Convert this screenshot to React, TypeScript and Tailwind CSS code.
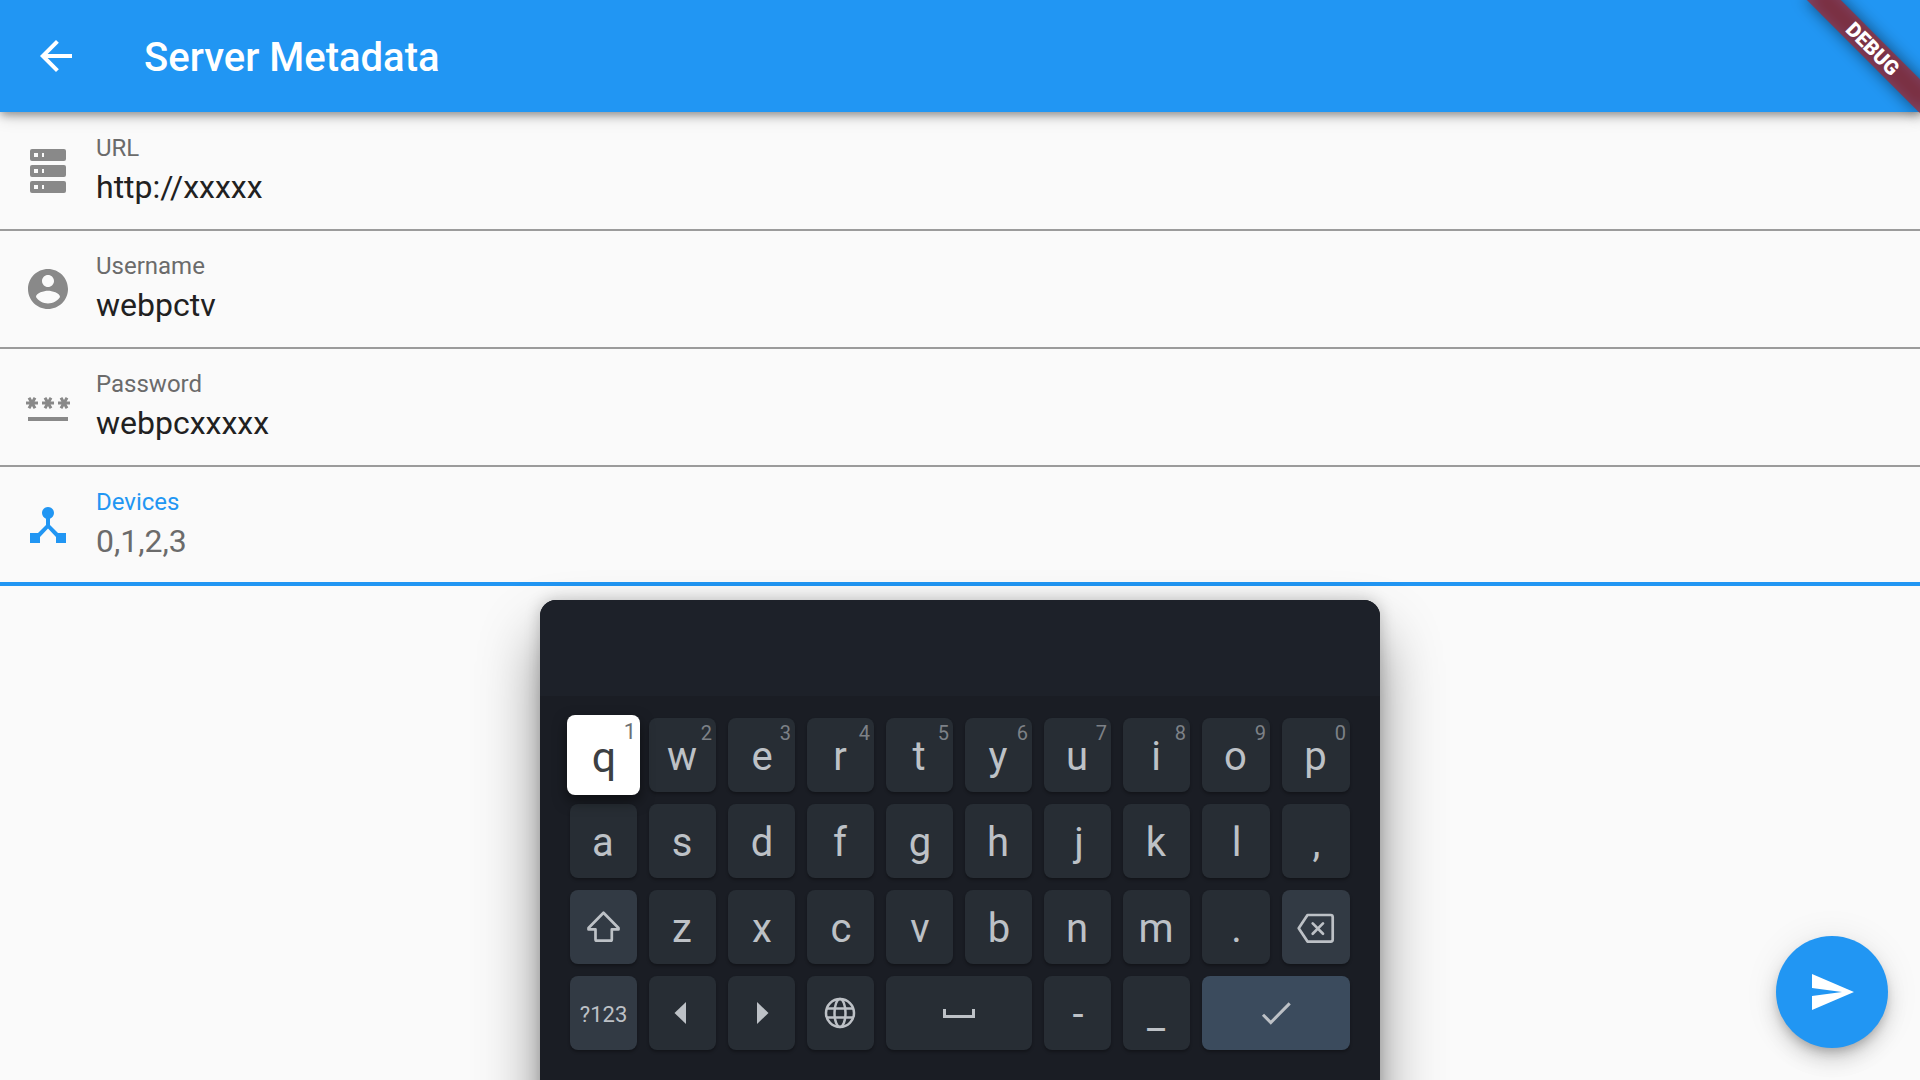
import type { ReactNode } from 'react';

const ICONS = {
  back: 'M20 11H7.83l5.59-5.59L12 4l-8 8 8 8 1.41-1.41L7.83 13H20v-2z',
  server:
    'M4,1H20A1,1 0 0,1 21,2V6A1,1 0 0,1 20,7H4A1,1 0 0,1 3,6V2A1,1 0 0,1 4,1M4,9H20A1,1 0 0,1 21,10V14A1,1 0 0,1 20,15H4A1,1 0 0,1 3,14V10A1,1 0 0,1 4,9M4,17H20A1,1 0 0,1 21,18V22A1,1 0 0,1 20,23H4A1,1 0 0,1 3,22V18A1,1 0 0,1 4,17M9,5H10V3H9V5M9,13H10V11H9V13M9,21H10V19H9V21M5,3V5H7V3H5M5,11V13H7V11H5M5,19V21H7V19H5Z',
  account:
    'M12 2C6.48 2 2 6.48 2 12s4.48 10 10 10 10-4.48 10-10S17.52 2 12 2zm0 3c1.66 0 3 1.34 3 3s-1.34 3-3 3-3-1.34-3-3 1.34-3 3-3zm0 14.2c-2.5 0-4.71-1.28-6-3.22.03-1.99 4-3.08 6-3.08 1.99 0 5.97 1.09 6 3.08-1.29 1.94-3.5 3.22-6 3.22z',
  password:
    'M2 17h20v2H2v-2zm1.15-4.05L4 11.47l.85 1.48 1.3-.75-.85-1.48H7v-1.5H5.3l.85-1.47L4.85 7 4 8.47 3.15 7l-1.3.75.85 1.47H1v1.5h1.7l-.85 1.48 1.3.75zm6.7-.75l1.3.75.85-1.48.85 1.48 1.3-.75-.85-1.48H15v-1.5h-1.7l.85-1.47-1.3-.75L12 8.47 11.15 7l-1.3.75.85 1.47H9v1.5h1.7l-.85 1.48zM23 9.22h-1.7l.85-1.47-1.3-.75L20 8.47 19.15 7l-1.3.75.85 1.47H17v1.5h1.7l-.85 1.48 1.3.75.85-1.48.85 1.48 1.3-.75-.85-1.48H23v-1.5z',
  hub: 'M17 16l-4-4V8.82C14.16 8.4 15 7.3 15 6c0-1.66-1.34-3-3-3S9 4.34 9 6c0 1.3.84 2.4 2 2.82V12l-4 4H3v5h5v-3.05l4-4.2 4 4.2V21h5v-5h-4z',
  send: 'M2.01 21L23 12 2.01 3 2 10l15 2-15 2z',
};

function Icon({ d }: { d: string }) {
  return (
    <svg viewBox="0 0 24 24" className="size-12 shrink-0" fill="currentColor" fillRule="evenodd">
      <path d={d} />
    </svg>
  );
}

function Field({ icon, label, value, focused = false, first = false }: {
  icon: string;
  label: string;
  value: string;
  focused?: boolean;
  first?: boolean;
}) {
  return (
    <div
      className={`flex box-border px-6 ${first ? 'h-[119px] pt-[35px]' : focused ? 'h-[119px] pt-[34px]' : 'h-[118px] pt-[34px]'} ${
        focused ? 'border-b-4 border-[#2196f3]' : 'border-b-2 border-[#9b9b9b]'
      }`}
    >
      <div className={focused ? 'text-[#2196f3]' : 'text-[#898989]'}>
        <Icon d={icon} />
      </div>
      <div className="ml-6 -mt-[13px] flex flex-col">
        <span className={`text-2xl leading-7 ${focused ? 'text-[#2196f3]' : 'text-[#6b6b6b]'}`}>{label}</span>
        <span className={`mt-[6px] text-[32px] leading-[38px] ${focused ? 'text-[#6b6b6b]' : 'text-[#212121]'}`}>
          {value}
        </span>
      </div>
    </div>
  );
}

function Key({ children, hint, tone = 'letter' }: {
  children: ReactNode;
  hint?: string;
  tone?: 'letter' | 'special' | 'enter' | 'active';
}) {
  const tones = {
    letter: 'bg-[#272d34] text-[#bdc1c6]',
    special: 'bg-[#323a44] text-[#bdc1c6]',
    enter: 'col-span-2 bg-[#3b4b5d] text-[#bdc1c6]',
    active: 'z-10 -mx-[3px] -my-[3px] bg-white text-[#3c4043] shadow-[0_6px_14px_rgba(0,0,0,0.5)]',
  };
  return (
    <div
      className={`relative flex items-center justify-center rounded-lg text-[40px] leading-none shadow-[0_2px_3px_rgba(0,0,0,0.3)] ${tones[tone]}`}
    >
      {children}
      {hint && (
        <span
          className={
            tone === 'active'
              ? 'absolute right-1 top-[6px] text-[22px] leading-[22px] text-[#6b6f74]'
              : 'absolute right-1 top-[5px] text-[20px] leading-[20px] text-[#7d8187]'
          }
        >
          {hint}
        </span>
      )}
    </div>
  );
}

function Letter({ c }: { c: string }) {
  const nudge = c === 'j' ? 'pl-[3px]' : 'edgxcvbl.,-'.includes(c) ? 'pl-px' : 'pr-px';
  return <span className={`pt-1 ${nudge}`}>{c}</span>;
}

function Stroke({ children }: { children: ReactNode }) {
  return (
    <svg viewBox="0 0 40 40" className="size-10" fill="none" stroke="currentColor" strokeWidth="2.7" strokeLinejoin="round" strokeLinecap="round">
      {children}
    </svg>
  );
}

function Keyboard() {
  return (
    <div className="absolute left-[540px] top-[600px] flex h-[520px] w-[840px] flex-col overflow-visible rounded-t-2xl bg-[#1a1d24] shadow-[0_0_16px_rgba(0,0,0,0.22),0_36px_60px_rgba(0,0,0,0.42)]">
      <div className="h-24 rounded-t-2xl bg-[#1d2129]" />
      <div className="grid grid-cols-[repeat(8,67px)_repeat(2,68px)] auto-rows-[74px] gap-3 px-[30px] pt-[22px]">
        <Key tone="active" hint="1">
          <span className="pt-[5px] pl-px text-[43px]">q</span>
        </Key>
        {['w', 'e', 'r', 't', 'y', 'u', 'i', 'o', 'p'].map((c, i) => (
          <Key key={c} hint={String((i + 2) % 10)}>
            <Letter c={c} />
          </Key>
        ))}
        {['a', 's', 'd', 'f', 'g', 'h', 'j', 'k', 'l', ','].map((c) => (
          <Key key={c}>
            <Letter c={c} />
          </Key>
        ))}
        <Key tone="special">
          <Stroke>
            <path d="M19.500 5.700 34.500 21V22.400H27.800V32.500Q27.800 33.700 26.600 33.700H12.700Q11.500 33.700 11.500 32.500V22.400H4.500V21Z" />
          </Stroke>
        </Key>
        {['z', 'x', 'c', 'v', 'b', 'n', 'm', '.'].map((c) => (
          <Key key={c}>
            <Letter c={c} />
          </Key>
        ))}
        <Key tone="special">
          <Stroke>
            <path d="M11.500 8H34.700Q36.700 8 36.700 10V32.600Q36.700 34.600 34.700 34.600H11.500L2.700 21.300Z M16.700 16.400 27 26.700M27 16.400 16.700 26.700" />
          </Stroke>
        </Key>
        <Key tone="special">
          <span className="pt-1 text-[22px]">?123</span>
        </Key>
        <Key>
          <svg viewBox="0 0 12 22" className="mr-[5px] h-[22px] w-3" fill="currentColor">
            <path d="M12 0V22L0.500 11Z" />
          </svg>
        </Key>
        <Key>
          <svg viewBox="0 0 12 22" className="ml-[3px] h-[22px] w-3" fill="currentColor">
            <path d="M0 0V22L11.500 11Z" />
          </svg>
        </Key>
        <Key>
          <svg viewBox="0 0 32 32" className="mr-px size-8" fill="none" stroke="currentColor" strokeWidth="2.5">
            <circle cx="16" cy="16" r="14" />
            <ellipse cx="16" cy="16" rx="5.500" ry="14" />
            <path d="M3 11.500H29M3 20.500H29" />
          </svg>
        </Key>
        <div className="col-span-2 grid">
          <Key>
            <svg viewBox="0 0 32 10" className="mt-[2px] h-[10px] w-8" fill="none" stroke="currentColor" strokeWidth="3">
              <path d="M1.500 0V7.500H30.500V0" />
            </svg>
          </Key>
        </div>
        <Key>
          <Letter c="-" />
        </Key>
        <Key>
          <Letter c="_" />
        </Key>
        <Key tone="enter">
          <svg viewBox="0 0 30 24" className="h-6 w-[30px]" fill="none" stroke="currentColor" strokeWidth="3">
            <path d="M2 13.700 9.800 21.500 28.700 2.400" />
          </svg>
        </Key>
      </div>
    </div>
  );
}

function DebugBanner() {
  return (
    <div className="pointer-events-none absolute right-0 top-0 size-[160px] overflow-hidden">
      <div className="absolute left-[80px] top-0 h-[80px] w-[160px] origin-top rotate-45">
        <div className="absolute left-0 top-[56px] h-6 w-[160px] bg-black/50 blur-[8px]" />
        <div className="absolute left-0 top-[56px] h-6 w-[160px] bg-[#b71c1c]/63 pl-[2px] text-center text-[20.400px] font-black leading-6 text-white">
          DEBUG
        </div>
      </div>
    </div>
  );
}

export default function App() {
  return (
    <div className="relative h-[1080px] w-[1920px] overflow-hidden bg-[#fafafa] font-['Roboto',sans-serif]">
      <header className="relative z-10 flex h-28 items-center bg-[#2196f3] px-8 text-white shadow-[0_4px_8px_-1px_rgba(0,0,0,0.32),0_4px_16px_rgba(0,0,0,0.18)]">
        <Icon d={ICONS.back} />
        <h1 className="ml-16 pt-1 text-[40px] font-medium leading-none">Server Metadata</h1>
      </header>
      <main>
        <Field first icon={ICONS.server} label="URL" value="http://xxxxx" />
        <Field icon={ICONS.account} label="Username" value="webpctv" />
        <Field icon={ICONS.password} label="Password" value="webpcxxxxx" />
        <Field focused icon={ICONS.hub} label="Devices" value="0,1,2,3" />
      </main>
      <button
        aria-label="Send"
        className="absolute bottom-8 right-8 flex size-28 items-center justify-center rounded-full bg-[#2196f3] text-white shadow-[0_6px_10px_-2px_rgba(0,0,0,0.2),0_12px_20px_rgba(0,0,0,0.14),0_2px_36px_rgba(0,0,0,0.08)]"
      >
        <Icon d={ICONS.send} />
      </button>
      <Keyboard />
      <div className="absolute right-0 top-0 z-20">
        <DebugBanner />
      </div>
    </div>
  );
}
